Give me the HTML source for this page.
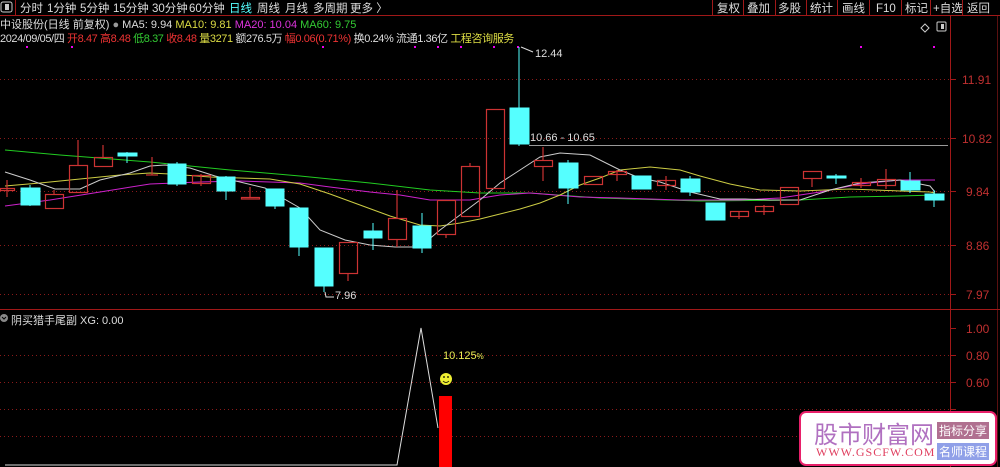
<!DOCTYPE html><html><head><meta charset="utf-8"><style>
body{margin:0;width:1000px;height:467px;background:#000;overflow:hidden;position:relative;font-family:"Liberation Sans","Noto Sans CJK SC",sans-serif;}
.t{position:absolute;white-space:nowrap;font-size:11px;}
</style></head><body>
<svg width="1000" height="467" style="position:absolute;left:0;top:0" font-family="Liberation Sans, Noto Sans CJK SC, sans-serif">
<line x1="0" y1="15.5" x2="1000" y2="15.5" stroke="#a01818"/>
<rect x="1" y="2" width="11" height="10" fill="none" stroke="#ccc" rx="2"/><rect x="5" y="4" width="4" height="6" fill="#ccc"/>
<line x1="15.5" y1="0" x2="15.5" y2="15" stroke="#a01818"/>
<g fill="#ddd" font-size="11.5">
<text x="20" y="12">分时</text><text x="47" y="12">1分钟</text><text x="80" y="12">5分钟</text><text x="113" y="12">15分钟</text><text x="152" y="12">30分钟</text><text x="189" y="12">60分钟</text>
<text x="229" y="12" fill="#5ff">日线</text><text x="257" y="12">周线</text><text x="285" y="12">月线</text><text x="313" y="12">多周期</text><text x="350" y="12">更多 〉</text>
<text x="717" y="12">复权</text><text x="747" y="12">叠加</text><text x="778" y="12">多股</text><text x="810" y="12">统计</text><text x="842" y="12">画线</text><text x="876" y="12">F10</text><text x="905" y="12">标记</text><text x="933" y="12">+自选</text><text x="967" y="12">返回</text>
</g>
<g stroke="#a01818"><line x1="712.5" y1="0" x2="712.5" y2="15"/><line x1="743.5" y1="0" x2="743.5" y2="15"/><line x1="775.5" y1="0" x2="775.5" y2="15"/><line x1="806.5" y1="0" x2="806.5" y2="15"/><line x1="837.5" y1="0" x2="837.5" y2="15"/><line x1="869.5" y1="0" x2="869.5" y2="15"/><line x1="901.5" y1="0" x2="901.5" y2="15"/><line x1="930.5" y1="0" x2="930.5" y2="15"/><line x1="962.5" y1="0" x2="962.5" y2="15"/></g>
<line x1="950.5" y1="16" x2="950.5" y2="467" stroke="#a01818"/>
<line x1="997.5" y1="16" x2="997.5" y2="467" stroke="#5a1010"/>
<line x1="0" y1="309.5" x2="1000" y2="309.5" stroke="#a01818"/>
<g stroke="#8a1a1a" stroke-dasharray="1,3"><line x1="0" y1="79.5" x2="950" y2="79.5"/><line x1="0" y1="138.5" x2="950" y2="138.5"/><line x1="0" y1="191.5" x2="950" y2="191.5"/><line x1="0" y1="245.5" x2="950" y2="245.5"/><line x1="0" y1="294.5" x2="950" y2="294.5"/>
<line x1="0" y1="355.5" x2="950" y2="355.5"/><line x1="0" y1="382.5" x2="950" y2="382.5"/><line x1="0" y1="409.5" x2="950" y2="409.5"/><line x1="0" y1="436.5" x2="950" y2="436.5"/></g>
<g stroke="#a01818"><line x1="950" y1="79.5" x2="956" y2="79.5"/><line x1="950" y1="138.5" x2="956" y2="138.5"/><line x1="950" y1="191.5" x2="956" y2="191.5"/><line x1="950" y1="245.5" x2="956" y2="245.5"/><line x1="950" y1="294.5" x2="956" y2="294.5"/><line x1="950" y1="328.5" x2="956" y2="328.5"/><line x1="950" y1="355.5" x2="956" y2="355.5"/><line x1="950" y1="382.5" x2="956" y2="382.5"/><line x1="950" y1="409.5" x2="956" y2="409.5"/></g>
<g fill="#c03030" font-size="12"><text x="962" y="84">11.91</text><text x="962" y="143">10.82</text><text x="966" y="196">9.84</text><text x="966" y="250">8.86</text><text x="966" y="299">7.97</text><text x="966" y="333">1.00</text><text x="966" y="360">0.80</text><text x="966" y="387">0.60</text></g>
<path d="M925 24 l4 4 -4 4 -4 -4z" fill="none" stroke="#ccc"/>
<rect x="937" y="22" width="9" height="9" fill="none" stroke="#ccc" rx="1"/><rect x="941" y="24" width="3" height="5" fill="#ccc"/>
<g fill="#e0e"><rect x="26" y="46" width="2" height="2"/><rect x="71" y="46" width="2" height="2"/><rect x="322" y="46" width="2" height="2"/><rect x="414" y="46" width="2" height="2"/><rect x="437" y="46" width="2" height="2"/><rect x="460" y="46" width="2" height="2"/><rect x="493" y="46" width="2" height="2"/><rect x="517" y="46" width="2" height="2"/><rect x="860" y="46" width="2" height="2"/><rect x="933" y="46" width="2" height="2"/></g>
<polyline fill="none" stroke="#2c2" points="5,150 60,155 150,162 230,170 300,176 370,183 430,190 480,193 530,193 600,198 700,201 800,200 850,197 900,196 935,195"/>
<polyline fill="none" stroke="#c2c" points="5,206 50,200 100,192 150,184 200,182 240,181 270,182 300,183 330,187 370,192 400,195 430,200 470,200 500,195 530,193 580,197 620,198 680,200 740,200 780,198 820,192 860,184 900,180 935,180"/>
<polyline fill="none" stroke="#cc4" points="5,186 40,183 80,179 120,175 150,173 170,174 210,177 240,178 270,179 300,184 330,194 360,205 390,216 420,225 440,226 460,223 480,219 500,214 520,209 540,203 560,195 580,185 600,178 620,170 650,167 680,170 700,176 730,184 760,190 800,191 850,189 900,191 930,192 935,193"/>
<polyline fill="none" stroke="#ccc" points="5,172 30,180 55,189 80,189 100,180 130,173 150,166 165,165 190,168 215,176 240,182 265,188 300,208 320,230 345,240 370,245 395,247 420,247 440,230 460,215 480,200 500,183 520,170 540,157 560,153 590,155 620,170 640,178 660,182 690,192 720,199 745,199 770,200 800,200 830,190 860,183 900,180 930,186 935,192"/>
<g stroke="#c33" fill="none" stroke-width="1.2">
<line x1="7" y1="180" x2="7" y2="197"/><rect x="0.5" y="188.5" width="14" height="2"/>
<line x1="54" y1="190" x2="54" y2="194"/><rect x="45.5" y="194.5" width="18" height="14"/>
<line x1="78" y1="140" x2="78" y2="165"/><rect x="69.5" y="165.5" width="18" height="27"/>
<line x1="103" y1="145" x2="103" y2="157"/><rect x="94.5" y="157.5" width="18" height="9"/>
<line x1="152" y1="157" x2="152" y2="175"/><line x1="146" y1="175" x2="158" y2="175"/>
<line x1="201" y1="174" x2="201" y2="186"/><rect x="192.5" y="175.5" width="18" height="8"/>
<line x1="250" y1="187" x2="250" y2="197"/><rect x="241.5" y="197.5" width="18" height="1.5"/>
<line x1="348" y1="274" x2="348" y2="281"/><rect x="339.5" y="242.5" width="18" height="31"/>
<line x1="397" y1="190" x2="397" y2="218"/><line x1="397" y1="240" x2="397" y2="247"/><rect x="388.5" y="218.5" width="18" height="21"/>
<rect x="437.5" y="200.5" width="18" height="34"/><line x1="446" y1="235" x2="446" y2="238"/>
<line x1="470" y1="163" x2="470" y2="166"/><rect x="461.5" y="166.5" width="18" height="50"/>
<rect x="486.5" y="109.5" width="18" height="79"/>
<line x1="543" y1="147" x2="543" y2="160"/><line x1="543" y1="167" x2="543" y2="181"/><rect x="534.5" y="160.5" width="18" height="6"/>
<rect x="584.5" y="176.5" width="18" height="8"/>
<line x1="617" y1="170" x2="617" y2="181"/><rect x="608.5" y="171.5" width="18" height="3"/>
<line x1="666" y1="176" x2="666" y2="190"/><rect x="657.5" y="180.5" width="18" height="5"/>
<line x1="739" y1="211" x2="739" y2="219"/><rect x="730.5" y="211.5" width="18" height="5"/>
<line x1="764" y1="205" x2="764" y2="215"/><rect x="755.5" y="206.5" width="18" height="5"/>
<rect x="780.5" y="187.5" width="18" height="17"/>
<line x1="812" y1="179" x2="812" y2="187"/><rect x="803.5" y="171.5" width="18" height="7"/>
<line x1="861" y1="178" x2="861" y2="188"/><rect x="852.5" y="182.5" width="18" height="3"/>
<line x1="886" y1="169" x2="886" y2="189"/><rect x="877.5" y="179.5" width="18" height="6"/>
</g>
<g fill="#5ff" stroke="#5ff">
<line x1="30" y1="185" x2="30" y2="206"/><rect x="21" y="188" width="19" height="17"/>
<line x1="127" y1="152" x2="127" y2="163"/><rect x="118" y="153" width="19" height="3"/>
<line x1="177" y1="162" x2="177" y2="186"/><rect x="168" y="164" width="18" height="20"/>
<line x1="226" y1="176" x2="226" y2="200"/><rect x="217" y="177" width="18" height="14"/>
<line x1="275" y1="189" x2="275" y2="209"/><rect x="266" y="189" width="18" height="17"/>
<line x1="299" y1="208" x2="299" y2="256"/><rect x="290" y="208" width="18" height="39"/>
<line x1="324" y1="248" x2="324" y2="292"/><rect x="315" y="248" width="18" height="38"/>
<line x1="373" y1="223" x2="373" y2="250"/><rect x="364" y="231" width="18" height="7"/>
<line x1="422" y1="213" x2="422" y2="253"/><rect x="413" y="226" width="18" height="22"/>
<line x1="519" y1="47" x2="519" y2="146"/><rect x="510" y="108" width="19" height="36"/>
<line x1="568" y1="160" x2="568" y2="204"/><rect x="559" y="163" width="19" height="25"/>
<rect x="632" y="176" width="19" height="13"/>
<line x1="690" y1="176" x2="690" y2="196"/><rect x="681" y="179" width="19" height="13"/>
<rect x="706" y="203" width="19" height="17"/>
<line x1="836" y1="174" x2="836" y2="184"/><rect x="827" y="176" width="19" height="2"/>
<line x1="910" y1="172" x2="910" y2="193"/><rect x="901" y="181" width="19" height="9"/>
<line x1="934" y1="190" x2="934" y2="207"/><rect x="925" y="194" width="19" height="6"/>
</g>
<line x1="529" y1="145.5" x2="948" y2="145.5" stroke="#999"/>
<g fill="#ddd" font-size="11"><text x="530" y="141">10.66 - 10.65</text><text x="535" y="57">12.44</text><text x="335" y="299">7.96</text></g>
<path d="M521 47 L533 52" stroke="#ddd" fill="none"/><path d="M325 292 L326 297 L334 297" stroke="#ddd" fill="none"/>
<polyline fill="none" stroke="#ddd" points="5,465 397,465 421,328 438,428"/>
<rect x="439" y="396" width="13" height="71" fill="#f00"/>
<circle cx="446" cy="379" r="6" fill="#ee3"/><circle cx="444" cy="377" r="0.9" fill="#000"/><circle cx="448" cy="377" r="0.9" fill="#000"/><path d="M443 381 q3 3 6 0" stroke="#000" fill="none" stroke-width="0.8"/>
<text x="443" y="359" fill="#ee5" font-size="11">10.125<tspan font-size="8">%</tspan></text>
<circle cx="4" cy="318" r="4" fill="#888"/><path d="M2 317 l2 2 2-2" stroke="#000" fill="none"/>
</svg>
<div class="t" style="left:0;top:16px;color:#ddd">中设股份(日线 前复权) <span style="color:#999">●</span> MA5: 9.94 <span style="color:#dd4">MA10: 9.81</span> <span style="color:#d3d">MA20: 10.04</span> <span style="color:#3c3">MA60: 9.75</span></div>
<div class="t" style="left:0;top:30px;color:#ddd;letter-spacing:-0.4px">2024/09/05/四 <span style="color:#e33">开8.47 高8.48</span> <span style="color:#3c3">低8.37</span> <span style="color:#e33">收8.48</span> <span style="color:#dd4">量3271</span> 额276.5万 <span style="color:#e33">幅0.06(0.71%)</span> 换0.24% 流通1.36亿 <span style="color:#dd4">工程咨询服务</span></div>
<div class="t" style="left:11px;top:312px;color:#ddd">阴买猎手尾副 XG: 0.00</div>
<div style="position:absolute;left:799px;top:411px;width:194px;height:51px;background:#fff;border:2px solid #e8206a;border-radius:7px">
<div class="t" style="left:13px;top:2px;font-size:24px;color:#b070c0">股市财富网</div>
<div class="t" style="left:15px;top:32px;font-size:12px;color:#e04060;font-family:'Liberation Serif',serif;letter-spacing:1px">WWW.GSCFW.COM</div>
<div class="t" style="left:136px;top:9px;background:#b07090;color:#fff;font-size:12px;padding:0 2px">指标分享</div>
<div class="t" style="left:136px;top:30px;background:#90a0e8;color:#fff;font-size:12px;padding:0 2px">名师课程</div>
</div>
</body></html>
